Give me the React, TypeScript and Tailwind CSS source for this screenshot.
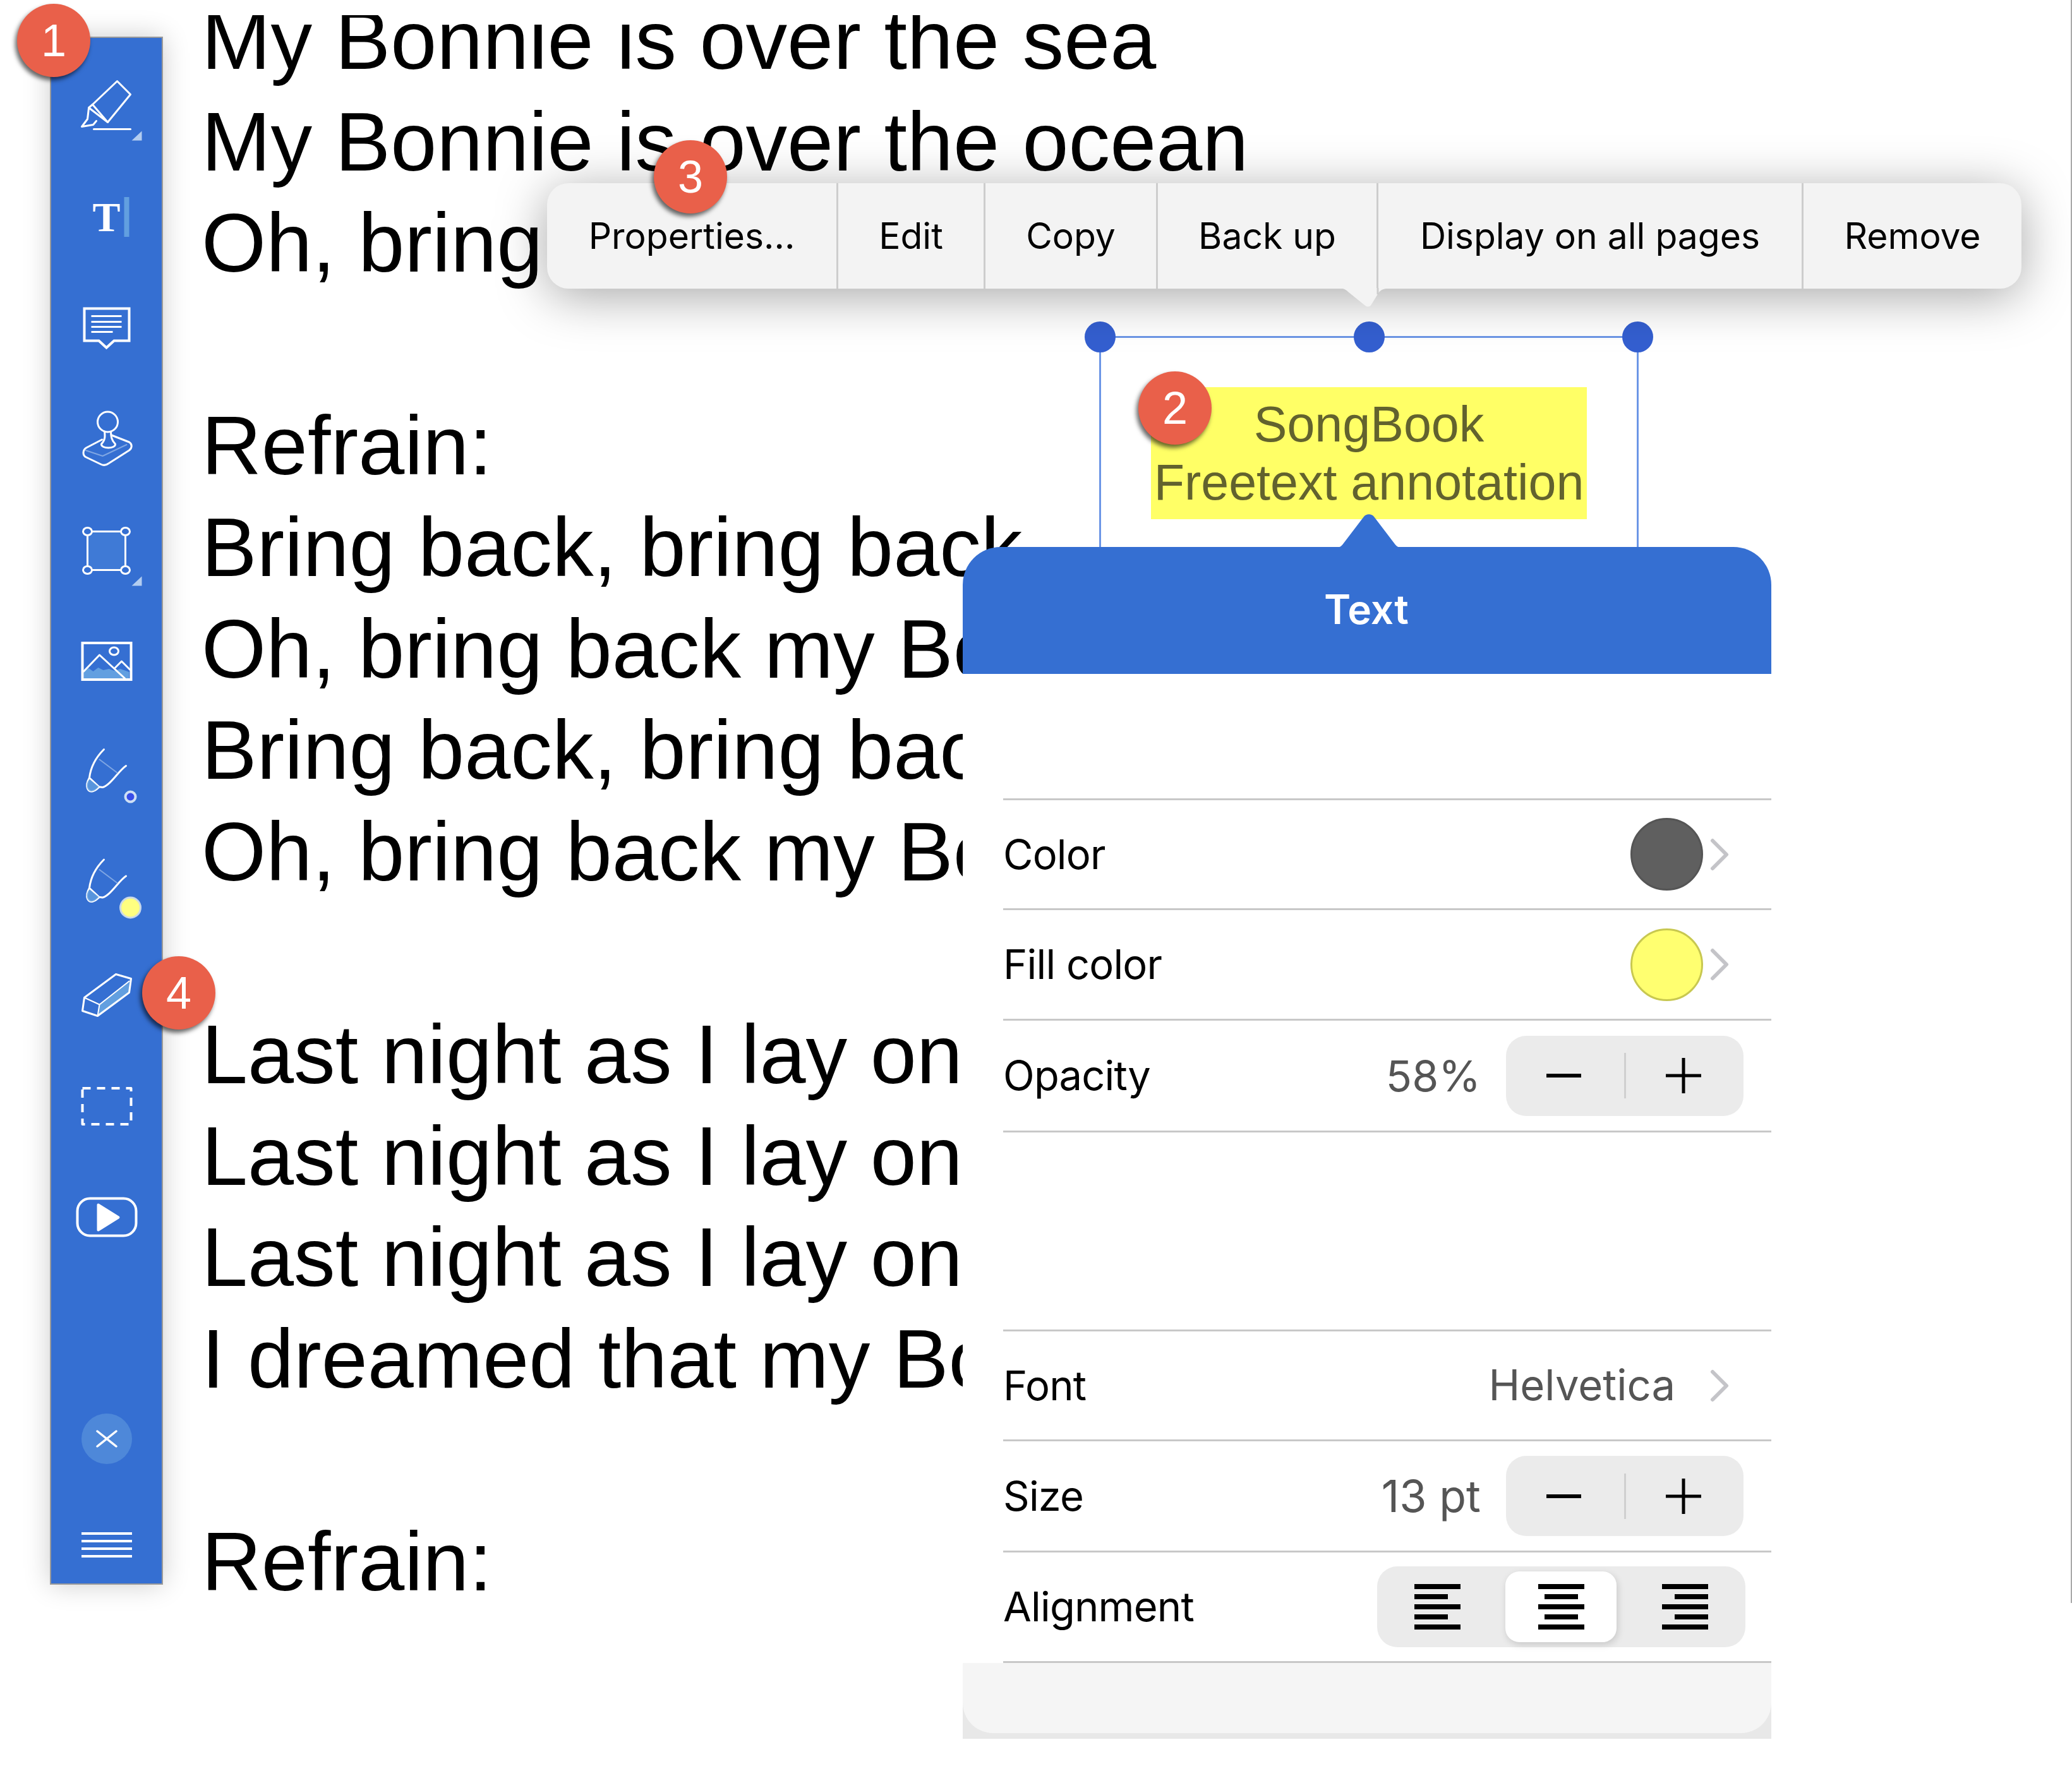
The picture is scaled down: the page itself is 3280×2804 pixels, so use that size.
const LYRICS = [
  'My Bonnie is over the sea',
  'My Bonnie is over the ocean',
  'Oh, bring back my Bonnie to me',
  '',
  'Refrain:',
  'Bring back, bring back',
  'Oh, bring back my Bonnie to me',
  'Bring back, bring back',
  'Oh, bring back my Bonnie to me',
  '',
  'Last night as I lay on my pillow',
  'Last night as I lay on my bed',
  'Last night as I lay on my pillow',
  'I dreamed that my Bonnie was dead',
  '',
  'Refrain:',
];

const MENU = [
  { label: 'Properties...', w: 'w-[461px]' },
  { label: 'Edit', w: 'w-[233px]' },
  { label: 'Copy', w: 'w-[273px]' },
  { label: 'Back up', w: 'w-[349px]' },
  { label: 'Display on all pages', w: 'w-[673px]' },
  { label: 'Remove', w: 'flex-1' },
];

function Badge({ n, className }: { n: number; className: string }) {
  return (
    <div
      className={`absolute z-30 flex h-[116px] w-[116px] items-center justify-center rounded-full bg-[#e9604a] font-['Liberation_Sans',sans-serif] text-[72px] text-white shadow-[-3px_5px_7px_rgba(0,0,0,0.6)] ${className}`}
    >
      {n}
    </div>
  );
}

function ToolIcon({ yc, children }: { yc: number; children: React.ReactNode }) {
  // viewBox is in page coordinates around the sidebar centre line
  return (
    <svg
      width="120"
      height="120"
      viewBox={`108.5 ${yc - 60} 120 120`}
      fill="none"
      stroke="white"
      strokeWidth="3"
      strokeLinejoin="round"
      strokeLinecap="round"
    >
      {children}
    </svg>
  );
}

function Corner({ y }: { y: number }) {
  return <path d={`M224 ${y}V${y + 15}H208Z`} fill="#b3cdf0" stroke="none" />;
}

function Pen({ dy }: { dy: number }) {
  return (
    <g transform={`translate(0 ${dy})`}>
      <path d="M164 1187C152 1199 143 1215 141 1232L156 1246" />
      <path d="M141 1232C137 1239 136 1244 138 1249C142 1257 150 1253 156 1247C158 1246 160 1247 162 1247C175 1243 187 1221 199 1213" />
      <path d="M141 1234L156 1246C150 1253 142 1257 138 1249C136 1244 137 1239 141 1234Z" fill="#629fe0" stroke="none" opacity="0.8" />
      <path d="M157 1203L185 1224" stroke="#7fa6e3" strokeWidth="2" />
    </g>
  );
}

function Sidebar() {
  return (
    <div className="z-10 mt-[34px] flex h-[2451px] w-[179px] flex-none flex-col items-center border-2 border-[#9a9a9a] bg-[#356fd2] pt-[24px] shadow-[0_0_40px_rgba(0,0,0,0.2)]">
      <div className="flex flex-col items-center">
        <div className="flex h-[175.5px] items-center">
          <ToolIcon yc={172.5}>
            <path d="M185 129L206 150L170 194L146 166Z" />
            <path d="M146 166L140 171L170 194" />
            <path d="M140 172L138 189L129 201L147 198L152 192" />
            <path d="M148 205H206" />
            <Corner y={208} />
          </ToolIcon>
        </div>
        <div className="flex h-[175.5px] items-center">
          <ToolIcon yc={348}>
            <text x="146" y="367" fontFamily="Liberation Serif, serif" fontWeight="700" fontSize="66" fill="white" stroke="none">
              T
            </text>
            <rect x="196" y="313" width="8" height="63" fill="#629fe0" stroke="none" />
          </ToolIcon>
        </div>
        <div className="flex h-[175.5px] items-center">
          <ToolIcon yc={523.5}>
            <path d="M133 489H204V540H180L168 551L156 540H133Z" strokeWidth="4" strokeLinecap="butt" strokeLinejoin="miter" />
            <path d="M144 501H192M144 510H192M144 518H192M144 526H178" strokeLinecap="butt" />
          </ToolIcon>
        </div>
        <div className="flex h-[175.5px] items-center">
          <ToolIcon yc={699}>
            <circle cx="170" cy="669" r="16" />
            <path d="M165 684C166 692 166 698 160 704C159 712 183 712 182 704C176 698 175 692 175 684" />
            <path d="M161 697L136 710C130 714 130 722 136 725L159 736C163 738 167 738 171 735L204 714C209 710 209 704 204 701L176 690" />
            <path d="M135 714L162 723L200 705" stroke="#7fa6e3" strokeWidth="2" />
          </ToolIcon>
        </div>
        <div className="flex h-[175.5px] items-center">
          <ToolIcon yc={874.5}>
            <rect x="138" y="842" width="60" height="61" fill="#3f7ad6" />
            <ellipse cx="138" cy="842" rx="7" ry="6" fill="#356fd2" />
            <ellipse cx="198" cy="842" rx="7" ry="6" fill="#356fd2" />
            <ellipse cx="138" cy="903" rx="7" ry="6" fill="#356fd2" />
            <ellipse cx="198" cy="903" rx="7" ry="6" fill="#356fd2" />
            <Corner y={913} />
          </ToolIcon>
        </div>
        <div className="flex h-[175.5px] items-center">
          <ToolIcon yc={1050}>
            <path d="M132 1076V1063L140 1059L147 1064L155 1058L163 1062L172 1060L180 1063L190 1060L204 1065V1076Z" fill="#629fe0" stroke="none" />
            <rect x="130" y="1019" width="77" height="58" strokeWidth="4" strokeLinejoin="miter" />
            <ellipse cx="180" cy="1032" rx="7" ry="6" />
            <path d="M132 1064L157 1038L197 1075" />
            <path d="M182 1058L192 1048L205 1061" />
          </ToolIcon>
        </div>
        <div className="flex h-[175.5px] items-center">
          <ToolIcon yc={1225.5}>
            <Pen dy={0} />
            <circle cx="206" cy="1262" r="8" fill="#3a4ee8" stroke="#cfe0f5" strokeWidth="4" />
          </ToolIcon>
        </div>
        <div className="flex h-[175.5px] items-center">
          <ToolIcon yc={1401}>
            <Pen dy={175} />
            <circle cx="206" cy="1438" r="16" fill="#ffff80" stroke="#c9d8e8" strokeWidth="3" />
          </ToolIcon>
        </div>
        <div className="flex h-[175.5px] items-center">
          <ToolIcon yc={1576.5}>
            <path d="M157 1591L204 1554L204 1572L154 1609Z" fill="#629fe0" stroke="none" />
            <path d="M130 1601L133 1580L183 1543L207 1550L204 1572L154 1609Z" />
            <path d="M133 1580L157 1591L204 1554M157 1591L154 1609" strokeWidth="2" />
          </ToolIcon>
        </div>
        <div className="flex h-[175.5px] items-center">
          <ToolIcon yc={1752}>
            <rect x="130" y="1724" width="77" height="57" strokeWidth="4" strokeDasharray="13 10" strokeLinecap="butt" />
          </ToolIcon>
        </div>
        <div className="flex h-[175.5px] items-center">
          <ToolIcon yc={1927.5}>
            <rect x="122" y="1898" width="93" height="59" rx="20" strokeWidth="4" />
            <path d="M155 1908L187 1928L155 1948Z" fill="white" strokeWidth="4" />
          </ToolIcon>
        </div>
      </div>
      <div className="flex-1" />
      <div className="mb-[108px] flex h-[80px] w-[80px] items-center justify-center rounded-full bg-[#4e88d9]">
        <svg width="36" height="36" viewBox="0 0 36 36" stroke="white" strokeWidth="3.5" strokeLinecap="round">
          <path d="M3 6L33 30M33 6L3 30" />
        </svg>
      </div>
      <div className="mb-[41px] flex w-[80px] flex-col gap-[8px]">
        <div className="h-[4px] bg-white" />
        <div className="h-[4px] bg-white" />
        <div className="h-[4px] bg-white" />
        <div className="h-[4px] bg-white" />
      </div>
    </div>
  );
}

function Chevron() {
  return (
    <svg width="32" height="52" viewBox="0 0 32 52" fill="none" stroke="#c4c4c8" strokeWidth="6" strokeLinecap="round" strokeLinejoin="round">
      <path d="M5 4L27 26L5 48" />
    </svg>
  );
}

function Stepper() {
  return (
    <div className="flex h-[127px] w-[376px] items-center rounded-[32px] bg-[#ebebeb]">
      <div className="flex flex-1 items-center justify-center pr-[4px]">
        <div className="h-[6px] w-[55px] bg-black" />
      </div>
      <div className="h-[72px] w-[3px] bg-[#cfcfcf]" />
      <div className="flex flex-1 items-center justify-center pr-[4px]">
        <svg width="56" height="56" viewBox="0 0 56 56" stroke="black" strokeWidth="5">
          <path d="M0 28H56M28 0V56" />
        </svg>
      </div>
    </div>
  );
}

function AlignIcon({ items }: { items: string }) {
  return (
    <div className={`flex w-[73px] flex-col gap-[8px] ${items}`}>
      <div className="h-[8px] w-[73px] bg-black" />
      <div className="h-[8px] w-[53px] bg-black" />
      <div className="h-[8px] w-[73px] bg-black" />
      <div className="h-[8px] w-[53px] bg-black" />
      <div className="h-[8px] w-[73px] bg-black" />
    </div>
  );
}

function Row({ label, children, h = 'h-[174px]' }: { label: string; children?: React.ReactNode; h?: string }) {
  return (
    <div className={`ml-[64px] flex flex-none items-center justify-between border-b-[3px] border-[#c8c8c8] ${h}`}>
      <span className="text-[65px] tracking-[-0.8px] text-black">{label}</span>
      {children}
    </div>
  );
}

export default function App() {
  return (
    <div className="relative h-[2804px] w-[3280px] overflow-hidden bg-white font-['Inter',sans-serif]">
      {/* document under the toolbar */}
      <div className="absolute top-0 right-0 h-[2538px] w-[2px] bg-[#aaaaaa]" />
      <div className="flex items-start pl-[79px] pt-[24px]">
        <Sidebar />
        <div className="ml-[61px] h-[2760px] overflow-hidden font-['Liberation_Sans',sans-serif] text-[131.35px] leading-[160.6px] text-black">
          <div className="-mt-[40px]">
            {LYRICS.map((line, i) => (
              <div key={i} className="h-[160.6px] whitespace-nowrap">
                {line}
              </div>
            ))}
          </div>
        </div>
      </div>

      <Badge n={1} className="left-[27px] top-[6px]" />
      <Badge n={4} className="left-[225px] top-[1514px]" />

      {/* selected annotation */}
      <div className="absolute left-[1740px] top-[532px] h-[334px] w-[854px] border-t-[3px] border-r-[3px] border-l-[3px] border-[#6c96e6]">
        <div className="absolute left-[79px] top-[78px] flex h-[209px] w-[690px] flex-col items-center justify-center bg-[#ffff66] font-['Liberation_Sans',sans-serif] text-[79px] leading-[92px] text-[#62622e]">
          <span>SongBook</span>
          <span>Freetext annotation</span>
        </div>
        <div className="absolute -left-[26px] -top-[26px] h-[49px] w-[49px] rounded-full bg-[#345fd0]" />
        <div className="absolute left-[400px] -top-[26px] h-[49px] w-[49px] rounded-full bg-[#345fd0]" />
        <div className="absolute -right-[26px] -top-[26px] h-[49px] w-[49px] rounded-full bg-[#345fd0]" />
      </div>
      <Badge n={2} className="left-[1802px] top-[588px]" />

      {/* context menu */}
      <div className="absolute left-[866px] top-[290px] z-20 flex h-[167px] w-[2334px] rounded-[34px] bg-[#f3f3f3] text-[57px] shadow-[0_12px_80px_rgba(0,0,0,0.35)]">
        {MENU.map((item, i) => (
          <div
            key={item.label}
            className={`flex items-center justify-center ${item.w} ${i < MENU.length - 1 ? 'border-r-[3px] border-[#cdcdcd]' : ''}`}
          >
            {item.label}
          </div>
        ))}
        <svg className="absolute left-[1250px] top-[166px]" width="100" height="32" viewBox="0 0 100 32">
          <path d="M0 0C10 0 14 2 18 6L44 27C49 31 53 30 55 26L66 8C70 2 76 0 92 0Z" fill="#f3f3f3" />
          <path d="M65 0V10" stroke="#cdcdcd" strokeWidth="3" />
        </svg>
      </div>
      <Badge n={3} className="left-[1035px] top-[222px]" />

      {/* properties popover */}
      <div className="absolute left-[1524px] top-[866px] z-20 flex h-[1887px] w-[1280px] flex-col">
        <svg className="absolute left-[583px] -top-[52px]" width="120" height="54" viewBox="0 0 120 54">
          <path d="M0 54C12 54 16 52 20 46L52 4C56 -1 64 -1 68 4L100 46C104 52 108 54 120 54Z" fill="#356fd2" />
        </svg>
        <div className="flex h-[201px] flex-none items-center justify-center rounded-t-[60px] bg-[#356fd2] pr-[2px] pb-[3px] text-[64px] font-semibold text-white">
          Text
        </div>
        <div className="flex flex-1 flex-col bg-white">
          <div className="ml-[64px] h-[200px] flex-none border-b-[3px] border-[#c8c8c8]" />
          <Row label="Color">
            <div className="flex items-center gap-[10px] pr-[66px]">
              <div className="h-[115px] w-[115px] rounded-full border-[3px] border-[#555555] bg-[#5f5f5f]" />
              <Chevron />
            </div>
          </Row>
          <Row label="Fill color" h="h-[175px]">
            <div className="flex items-center gap-[10px] pr-[66px]">
              <div className="h-[115px] w-[115px] rounded-full border-[3px] border-[#c8c850] bg-[#ffff70]" />
              <Chevron />
            </div>
          </Row>
          <Row label="Opacity" h="h-[177px]">
            <div className="flex items-center gap-[40px] pr-[44px]">
              <span className="text-[68px] text-[#555555]">58%</span>
              <Stepper />
            </div>
          </Row>
          <div className="ml-[64px] h-[315px] flex-none border-b-[3px] border-[#c8c8c8]" />
          <Row label="Font">
            <div className="flex items-center gap-[54px] pr-[66px]">
              <span className="text-[67px] text-[#555555]">Helvetica</span>
              <Chevron />
            </div>
          </Row>
          <Row label="Size" h="h-[176px]">
            <div className="flex items-center gap-[40px] pr-[44px]">
              <span className="text-[70px] text-[#555555]">13 pt</span>
              <Stepper />
            </div>
          </Row>
          <Row label="Alignment" h="h-[175px]">
            <div className="mr-[41px] flex h-[128px] w-[583px] items-center rounded-[32px] bg-[#ebebeb]">
              <div className="flex flex-1 justify-center pr-[12px]">
                <AlignIcon items="items-start" />
              </div>
              <div className="flex h-[112px] w-[176px] items-center justify-center rounded-[22px] bg-white shadow-[2px_4px_12px_rgba(0,0,0,0.15)]">
                <AlignIcon items="items-center" />
              </div>
              <div className="flex flex-1 justify-center pl-[13px]">
                <AlignIcon items="items-end" />
              </div>
            </div>
          </Row>
          <div className="flex-1 bg-[#e8e8e8]">
            <div className="h-[111px] rounded-b-[48px] bg-[#f5f5f5]" />
          </div>
        </div>
      </div>
    </div>
  );
}
